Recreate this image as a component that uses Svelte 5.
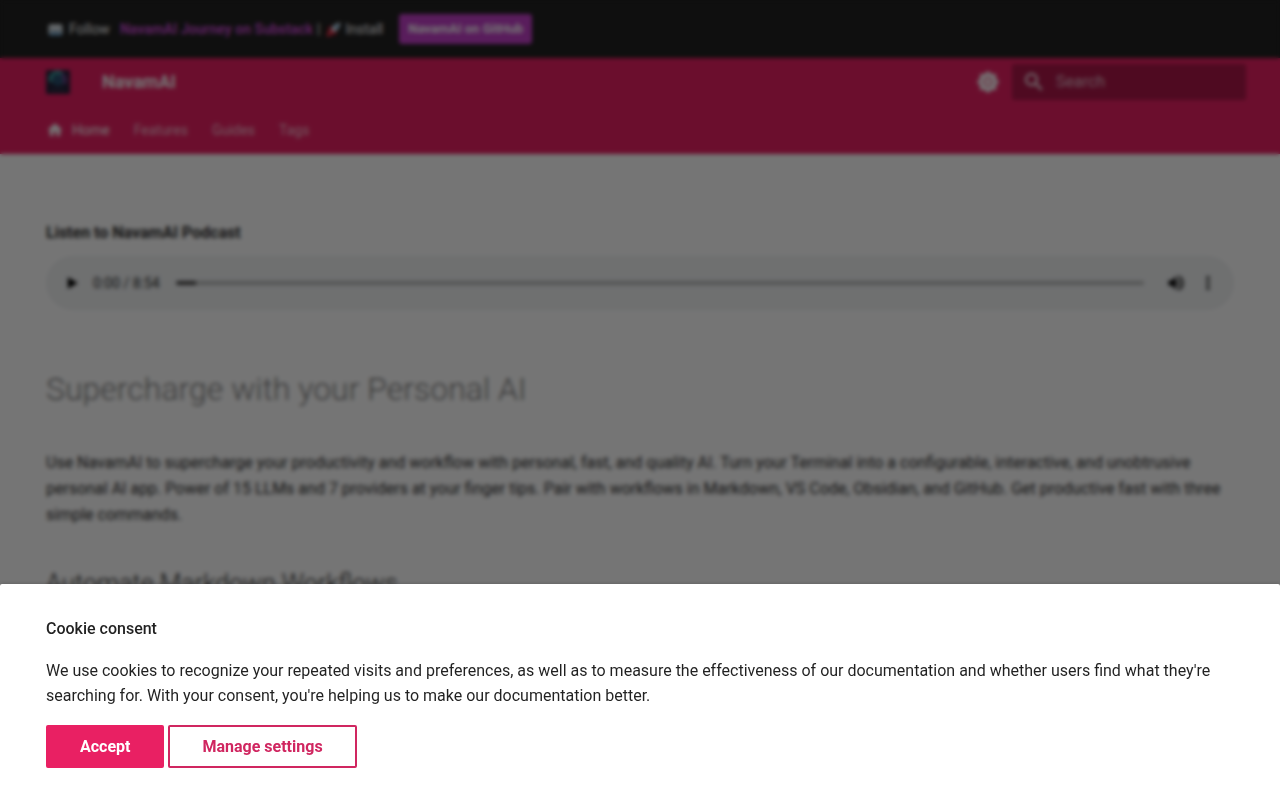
<script lang="ts">
  const tabs = ['Features', 'Guides', 'Tags'];
  let query = '';
  let showConsent = true;
  let progress = 0;
</script>

<div class="page">
  <aside class="banner">
    <div class="grid banner-inner">
      <svg class="emoji" viewBox="0 0 36 36" aria-hidden="true">
        <rect x="1" y="6" width="34" height="25" rx="4" fill="#ccd6dd" />
        <path d="M2 29 13 17h10l11 12q-1 2-3 2H5q-2 0-3-2z" fill="#99aab5" />
        <path d="M2 8l13 12q3 3 6 0L34 8q-1-2-3-2H5Q3 6 2 8z" fill="#e1e8ed" />
        <rect x="3" y="26" width="30" height="7" rx="3" fill="#5dadec" opacity=".6" />
      </svg>
      <span class="follow">Follow</span>
      <a class="substack" href="#substack">NavamAI Journey on Substack</a>
      <span class="divider">|</span>
      <svg class="emoji rocket" viewBox="0 0 36 36" aria-hidden="true">
        <path d="M1 17l8-7h9l-7 10zM19 35l7-8v-9l-10 7z" fill="#a0041e" />
        <path d="M35 1Q20 1 10 17l-1 4 6 6 4-1Q35 16 35 1z" fill="#ccd6dd" />
        <path d="M11 17l8 8Q13 35 1 35 1 23 11 17z" fill="#dd2e44" />
        <circle cx="25" cy="11" r="4" fill="#55acee" />
      </svg>
      <span>Install</span>
      <a class="github" href="#github">NavamAI on GitHub</a>
    </div>
  </aside>

  <header class="header">
    <div class="grid header-inner">
      <a class="logo" href="#home" aria-label="NavamAI">
        <svg viewBox="0 0 24 24" aria-hidden="true">
          <rect width="24" height="24" rx="1" fill="#242038" />
          <circle cx="12" cy="10" r="6" fill="#28506e" />
          <path d="M5 12a7 7 0 0 1 11-8" fill="none" stroke="#3fa5a5" stroke-width="3" />
          <path d="M16 4a7 7 0 0 1 2 10" fill="none" stroke="#7a4090" stroke-width="3" />
          <path d="M5 20h14" stroke="#34344c" stroke-width="2" />
        </svg>
      </a>
      <span class="title">NavamAI</span>
      <button class="palette" type="button" aria-label="Switch color mode">
        <svg viewBox="0 0 24 24" aria-hidden="true">
          <path
            fill-rule="evenodd"
            d="M12 0.7 15.3 4H20V8.7L23.3 12 20 15.3V20H15.3L12 23.3 8.7 20H4V15.3L0.7 12 4 8.7V4H8.7zM12 7a5 5 0 1 0 0 10 5 5 0 0 0 0-10zm0 2a3 3 0 1 1 0 6 3 3 0 0 1 0-6z"
          />
          <circle cx="12" cy="12" r="5" opacity=".4" />
        </svg>
      </button>
      <label class="search">
        <svg viewBox="0 0 24 24" aria-hidden="true">
          <path d="M9.5 3A6.5 6.5 0 0 1 16 9.5c0 1.61-.59 3.09-1.56 4.23l.27.27h.79l5 5-1.5 1.5-5-5v-.79l-.27-.27A6.52 6.52 0 0 1 9.5 16a6.5 6.5 0 0 1 0-13m0 2C7 5 5 7 5 9.5S7 14 9.5 14 14 12 14 9.5 12 5 9.5 5z" />
        </svg>
        <input type="text" placeholder="Search" aria-label="Search" bind:value={query} />
      </label>
    </div>
    <nav class="grid tabs" aria-label="Tabs">
      <a class="active" href="#home">
        <svg viewBox="0 0 24 24" aria-hidden="true"><path d="M10 20v-6h4v6h5v-8h3L12 3 2 12h3v8z" /></svg>
        Home
      </a>
      {#each tabs as tab}
        <a href="#{tab.toLowerCase()}">{tab}</a>
      {/each}
    </nav>
  </header>

  <main class="grid content">
    <strong class="podcast">Listen to NavamAI Podcast</strong>
    <div class="player">
      <button type="button" aria-label="Play">
        <svg viewBox="0 0 24 24" aria-hidden="true"><path d="M7 5v14l12-7z" /></svg>
      </button>
      <span class="time">0:00 / 8:54</span>
      <input class="seek" type="range" min="0" max="534" aria-label="Seek" bind:value={progress} />
      <button type="button" aria-label="Mute">
        <svg viewBox="0 0 24 24" aria-hidden="true">
          <path d="M3 9v6h4l5 5V4L7 9zm13.5 3A4.5 4.5 0 0 0 14 8v8a4.5 4.5 0 0 0 2.5-4zM14 3.2v2.1a7 7 0 0 1 0 13.4v2.1a9 9 0 0 0 0-17.6z" />
        </svg>
      </button>
      <button type="button" aria-label="More options">
        <svg viewBox="0 0 24 24" aria-hidden="true">
          <circle cx="12" cy="6" r="2" /><circle cx="12" cy="12" r="2" /><circle cx="12" cy="18" r="2" />
        </svg>
      </button>
    </div>

    <h1>Supercharge with your Personal AI</h1>
    <p>
      Use NavamAI to supercharge your productivity and workflow with personal, fast, and quality AI. Turn your
      Terminal into a configurable, interactive, and unobtrusive personal AI app. Power of 15 LLMs and 7 providers
      at your finger tips. Pair with workflows in Markdown, VS Code, Obsidian, and GitHub. Get productive fast with
      three simple commands.
    </p>
    <h2>Automate Markdown Workflows</h2>
  </main>
</div>

{#if showConsent}
  <div class="overlay"></div>
  <div class="consent" role="dialog" aria-labelledby="consent-title">
    <form class="grid" on:submit|preventDefault={() => (showConsent = false)}>
      <h4 id="consent-title">Cookie consent</h4>
      <p>
        We use cookies to recognize your repeated visits and preferences, as well as to measure the effectiveness of
        our documentation and whether users find what they're searching for. With your consent, you're helping us to
        make our documentation better.
      </p>
      <div class="actions">
        <button class="btn btn-primary" type="submit">Accept</button>
        <button class="btn" type="button">Manage settings</button>
      </div>
    </form>
  </div>
{/if}

<style>
  :global(body) {
    margin: 0;
    background: white;
    color: rgba(0, 0, 0, 0.87);
    font-family: Roboto, 'Liberation Sans', sans-serif;
    font-size: 16px;
    line-height: 26px;
  }
  .grid {
    box-sizing: border-box;
    max-width: 1220px;
    margin: 0 auto;
    padding: 0 16px;
  }
  a { color: inherit; text-decoration: none; }
  button, input { font: inherit; }
  svg { display: block; fill: currentColor; }

  /* Announcement bar */
  .banner {
    background: #212121;
    color: white;
    font-size: 14px;
  }
  .banner-inner {
    display: flex;
    align-items: center;
    height: 58px;
    padding: 0 18px;
  }
  .emoji { width: 15px; height: 15px; margin: 0 6px 0 0; }
  .rocket { margin: 0 4px 0 6px; }
  .follow { margin-right: 10px; }
  .substack { color: #c84bd0; font-weight: 700; }
  .divider { margin-left: 4px; }
  .github {
    margin-left: 16px;
    padding: 2px 9px;
    border-radius: 3px;
    background: #c23fc8;
    font-size: 13px;
    font-weight: 700;
  }

  /* Header */
  .header {
    background: #e92063;
    color: white;
  }
  .header-inner {
    display: flex;
    align-items: center;
    height: 48px;
    padding: 0 4px 0 16px;
  }
  .logo svg { width: 24px; height: 24px; }
  .title {
    flex: 1;
    margin-left: 32px;
    font-size: 18px;
    font-weight: 700;
  }
  .palette {
    margin-right: 12px;
    padding: 0;
    border: none;
    background: none;
    color: white;
    cursor: pointer;
  }
  .palette svg { width: 24px; height: 24px; }
  .search {
    display: flex;
    align-items: center;
    gap: 10px;
    box-sizing: border-box;
    width: 234px;
    height: 36px;
    padding: 0 10px;
    border-radius: 2px;
    background: rgba(0, 0, 0, 0.26);
  }
  .search svg { flex: none; width: 24px; height: 24px; }
  .search input {
    flex: 1;
    min-width: 0;
    padding: 0;
    border: none;
    outline: none;
    background: none;
    color: white;
  }
  .search input::placeholder { color: rgba(255, 255, 255, 0.7); }

  .tabs {
    display: flex;
    align-items: center;
    gap: 24px;
    height: 48px;
    font-size: 14px;
  }
  .tabs a {
    display: flex;
    align-items: center;
    gap: 8px;
    opacity: 0.7;
  }
  .tabs a.active { opacity: 1; }
  .tabs svg { width: 18px; height: 18px; }

  /* Content */
  .content { padding-top: 66px; }
  .podcast { display: block; }
  .player {
    display: flex;
    align-items: center;
    box-sizing: border-box;
    height: 54px;
    margin-top: 10px;
    padding: 0 10px;
    border-radius: 27px;
    background: #f1f3f4;
  }
  .player button {
    flex: none;
    padding: 6px;
    border: none;
    background: none;
    color: black;
    cursor: pointer;
  }
  .player svg { width: 20px; height: 20px; }
  .time { margin: 0 16px 0 5px; font-size: 14px; }
  .seek {
    flex: 1;
    min-width: 0;
    height: 4px;
    margin: 0 16px 0 0;
    border-radius: 2px;
    appearance: none;
    background: linear-gradient(to right, #444 20px, #b8baba 20px);
  }
  .seek::-webkit-slider-thumb { appearance: none; width: 0; height: 0; }

  h1 {
    margin: 58px 0 40px;
    color: rgba(0, 0, 0, 0.54);
    font-size: 32px;
    font-weight: 300;
    line-height: 42px;
  }
  h2 {
    margin: 38px 0 0;
    font-size: 25px;
    font-weight: 300;
    line-height: 36px;
  }
  p { margin: 0; }

  /* Cookie consent */
  .overlay {
    position: fixed;
    inset: 0;
    background: rgba(0, 0, 0, 0.54);
    backdrop-filter: blur(2px);
  }
  .consent {
    position: fixed;
    right: 0;
    bottom: 0;
    left: 0;
    padding: 32px 0;
    border-radius: 2px 2px 0 0;
    background: white;
    box-shadow: 0 0 4px rgba(0, 0, 0, 0.2);
  }
  h4 {
    margin: 0 0 16px;
    font-size: 16px;
    font-weight: 500;
  }
  .consent p { line-height: 25px; }
  .actions {
    display: flex;
    gap: 4px;
    margin-top: 17px;
  }
  .btn {
    padding: 10px 32px;
    border: 2px solid #d02660;
    border-radius: 2px;
    background: white;
    color: #d02660;
    font-weight: 700;
    line-height: 19px;
    cursor: pointer;
  }
  .btn-primary {
    border-color: #e92063;
    background: #e92063;
    color: white;
  }
</style>
